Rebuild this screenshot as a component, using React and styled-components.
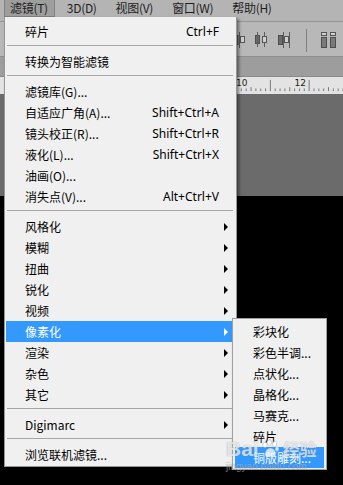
import styled, { createGlobalStyle } from "styled-components";

const GlobalStyle = createGlobalStyle`
  * {
    box-sizing: border-box;
  }
  body {
    margin: 0;
    background: #000;
    font-family: "Noto Sans CJK SC", "Noto Sans", sans-serif;
  }
`;

const topMenus = ["滤镜(T)", "3D(D)", "视图(V)", "窗口(W)", "帮助(H)"];

const filterItems = [
  { label: "碎片", shortcut: "Ctrl+F" },
  { sep: true },
  { label: "转换为智能滤镜" },
  { sep: true },
  { label: "滤镜库(G)..." },
  { label: "自适应广角(A)...", shortcut: "Shift+Ctrl+A" },
  { label: "镜头校正(R)...", shortcut: "Shift+Ctrl+R" },
  { label: "液化(L)...", shortcut: "Shift+Ctrl+X" },
  { label: "油画(O)..." },
  { label: "消失点(V)...", shortcut: "Alt+Ctrl+V" },
  { sep: true },
  { label: "风格化", sub: true },
  { label: "模糊", sub: true },
  { label: "扭曲", sub: true },
  { label: "锐化", sub: true },
  { label: "视频", sub: true },
  { label: "像素化", sub: true, active: true },
  { label: "渲染", sub: true },
  { label: "杂色", sub: true },
  { label: "其它", sub: true },
  { sep: true },
  { label: "Digimarc", sub: true },
  { sep: true },
  { label: "浏览联机滤镜..." },
];

const pixelItems = [
  "彩块化",
  "彩色半调...",
  "点状化...",
  "晶格化...",
  "马赛克...",
  "碎片",
  "铜版雕刻...",
];

function DistLeft() {
  return (
    <svg width="14" height="16" viewBox="0 0 14 16">
      <line x1="1.5" y1="0" x2="1.5" y2="16" stroke="#5c5c5c" />
      <rect x="2" y="3.5" width="4" height="9" fill="#6c6c6c" stroke="#4e4e4e" />
      <line x1="7.5" y1="0" x2="7.5" y2="16" stroke="#5c5c5c" />
      <rect x="8.5" y="4.5" width="4" height="6" fill="#cfcfcf" stroke="#555" />
    </svg>
  );
}

function DistCenter() {
  return (
    <svg width="14" height="16" viewBox="0 0 14 16">
      <rect x="0.5" y="3.5" width="4" height="8" fill="#6c6c6c" stroke="#4e4e4e" />
      <line x1="2.5" y1="0" x2="2.5" y2="15" stroke="#5c5c5c" />
      <line x1="9.5" y1="0" x2="9.5" y2="15" stroke="#5c5c5c" />
      <rect x="7.5" y="4.5" width="4" height="6" fill="#cfcfcf" stroke="#555" />
    </svg>
  );
}

function DistRight() {
  return (
    <svg width="14" height="16" viewBox="0 0 14 16">
      <rect x="0.5" y="3.5" width="4" height="9" fill="#6c6c6c" stroke="#4e4e4e" />
      <line x1="5.5" y1="0" x2="5.5" y2="16" stroke="#5c5c5c" />
      <rect x="6.5" y="4.5" width="4" height="6" fill="#cfcfcf" stroke="#555" />
      <line x1="11.5" y1="0" x2="11.5" y2="16" stroke="#5c5c5c" />
    </svg>
  );
}

function DistSpacing() {
  return (
    <svg width="16" height="16" viewBox="0 0 16 16">
      <rect x="0.5" y="0.5" width="5" height="3" fill="#cfcfcf" stroke="#555" />
      <rect x="0.5" y="5.5" width="5" height="10" fill="#7a7a7a" stroke="#4e4e4e" />
      <rect x="9.5" y="0.5" width="5" height="3" fill="#cfcfcf" stroke="#555" />
      <rect x="9.5" y="5.5" width="5" height="10" fill="#7a7a7a" stroke="#4e4e4e" />
    </svg>
  );
}

function RulerTicks() {
  const ticks = [];
  for (let i = 0; i < 24; i++) {
    const x = 1 + i * 7.35;
    const major = i % 8 === 0;
    const mid = i % 4 === 0;
    ticks.push(
      <line
        key={i}
        x1={x}
        x2={x}
        y1={major ? 0 : mid ? 11 : 13}
        y2={17}
        stroke="#444"
        strokeWidth="1"
      />
    );
  }
  return (
    <svg width="170" height="17" viewBox="0 0 170 17">
      {ticks}
    </svg>
  );
}

function Paw() {
  return (
    <svg width="20" height="20" viewBox="0 0 20 20">
      <g fill="rgba(255,255,255,0.72)" stroke="rgba(90,90,90,0.35)" strokeWidth="0.6">
        <ellipse cx="5" cy="6" rx="2.2" ry="2.8" />
        <ellipse cx="9.5" cy="3.5" rx="2.2" ry="2.8" />
        <ellipse cx="14.5" cy="5" rx="2.2" ry="2.8" />
        <ellipse cx="17" cy="10" rx="2" ry="2.5" />
        <path d="M5 16 C5 11 8 9 10.5 9 C13.5 9 16 12 16 15.5 C16 18.5 13 18.5 10.5 17.5 C8 18.5 5 18.8 5 16 Z" />
      </g>
    </svg>
  );
}

export default function App() {
  return (
    <>
      <GlobalStyle />
      <Screen>
        <MenuBar>
          {topMenus.map((m, i) => (
            <TopItem key={m} $active={i === 0}>
              {m}
            </TopItem>
          ))}
        </MenuBar>
        <Toolbar>
          <DistLeft />
          <DistCenter />
          <DistRight />
          <ToolSep />
          <DistSpacing />
        </Toolbar>
        <OptionBand />
        <Ruler>
          <RulerLabels>
            <span>10</span>
            <span>12</span>
          </RulerLabels>
          <RulerTicks />
        </Ruler>
        <Canvas />
        <Blackout />

        <Dropdown>
          {filterItems.map((it, i) =>
            it.sep ? (
              <Separator key={i} />
            ) : (
              <Item key={i} $active={it.active}>
                <Label>{it.label}</Label>
                {it.shortcut && <Shortcut>{it.shortcut}</Shortcut>}
                <ArrowSlot>{it.sub && <Arrow $active={it.active} />}</ArrowSlot>
              </Item>
            )
          )}
        </Dropdown>

        <SubMenu>
          {pixelItems.map((label, i) => (
            <SubItem key={label} $active={i === pixelItems.length - 1}>
              {label}
            </SubItem>
          ))}
        </SubMenu>

        <Watermark>
          <Brand>
            <span>Bai</span>
            <Paw />
            <span className="cn">经验</span>
          </Brand>
          <Site>jingyan.baidu.com</Site>
        </Watermark>
      </Screen>
    </>
  );
}

const Screen = styled.div`
  position: relative;
  width: 343px;
  height: 485px;
  overflow: hidden;
  display: flex;
  flex-direction: column;
  background: #000;
`;

const MenuBar = styled.div`
  height: 22px;
  flex: none;
  display: flex;
  align-items: flex-start;
  gap: 6px;
  padding-left: 4px;
  background: #b4b4b4;
  border-bottom: 1px solid #949494;
`;

const TopItem = styled.div`
  height: 17px;
  line-height: 16px;
  padding: 0 6px 0 5px;
  font-size: 12px;
  letter-spacing: -0.3px;
  color: #1e1e1e;
  white-space: nowrap;
  background: ${(p) => (p.$active ? "#9e9e9e" : "transparent")};
  border: 1px solid ${(p) => (p.$active ? "#828282" : "transparent")};
  border-top: none;
`;

const Toolbar = styled.div`
  height: 35px;
  flex: none;
  display: flex;
  align-items: center;
  gap: 9px;
  padding-left: 232px;
  padding-top: 2px;
  background: #b8b8b8;
  border-bottom: 1px solid #8e8e8e;
`;

const ToolSep = styled.div`
  width: 1px;
  height: 23px;
  margin: 0 5px;
  background: #808080;
`;

const OptionBand = styled.div`
  height: 20px;
  flex: none;
  background: #9d9d9d;
  border-bottom: 1px solid #8a8a8a;
`;

const Ruler = styled.div`
  position: relative;
  height: 17px;
  flex: none;
  background: #e3e3e3;
  padding-left: 231px;
  display: flex;
  align-items: flex-end;
`;

const RulerLabels = styled.div`
  position: absolute;
  top: 1px;
  left: 236px;
  display: flex;
  gap: 47px;
  font-family: "DejaVu Sans", sans-serif;
  font-size: 9px;
  line-height: 11px;
  color: #1a1a1a;
`;

const Canvas = styled.div`
  height: 102px;
  flex: none;
  background: #6b6b6b;
`;

const Blackout = styled.div`
  flex: 1;
  background: #000;
`;

const Dropdown = styled.div`
  position: absolute;
  left: 4px;
  top: 17px;
  width: 233px;
  padding: 4px 1px 1px 1px;
  background: #f0f0f0;
  border: 1px solid #979797;
  border-top: none;
  box-shadow: 2px 2px 3px rgba(0, 0, 0, 0.45);
`;

const Item = styled.div`
  display: flex;
  align-items: center;
  height: 21px;
  padding-left: 19px;
  font-size: 12px;
  line-height: 21px;
  white-space: nowrap;
  color: ${(p) => (p.$active ? "#fff" : "#000")};
  background: ${(p) => (p.$active ? "#3399ff" : "transparent")};
`;

const Label = styled.span`
  flex: 1;
`;

const Shortcut = styled.span`
  font-family: "Noto Sans", sans-serif;
`;

const ArrowSlot = styled.span`
  width: 16px;
  height: 21px;
  display: flex;
  align-items: center;
  padding-left: 5px;
`;

const Arrow = styled.span`
  width: 0;
  height: 0;
  border-left: 4px solid ${(p) => (p.$active ? "#fff" : "#000")};
  border-top: 4px solid transparent;
  border-bottom: 4px solid transparent;
`;

const Separator = styled.div`
  height: 1px;
  margin: 3px 2px 5px 1px;
  background: #a6a6a6;
`;

const SubMenu = styled.div`
  position: absolute;
  left: 232px;
  top: 318px;
  width: 95px;
  padding: 2px 2px 1px;
  background: #f0f0f0;
  border: 1px solid #a0a0a0;
  box-shadow: 2px 2px 3px rgba(0, 0, 0, 0.45);
`;

const SubItem = styled.div`
  height: 21px;
  padding-left: 18px;
  font-size: 12px;
  line-height: 21px;
  white-space: nowrap;
  color: ${(p) => (p.$active ? "#fff" : "#000")};
  background: ${(p) => (p.$active ? "#3399ff" : "transparent")};
`;

const Watermark = styled.div`
  position: absolute;
  left: 226px;
  top: 437px;
  color: rgba(255, 255, 255, 0.72);
  text-shadow: 0 0 1px rgba(80, 80, 80, 0.5);
  pointer-events: none;
`;

const Brand = styled.div`
  display: flex;
  align-items: center;
  gap: 1px;
  font-family: "Liberation Sans", sans-serif;
  font-weight: bold;
  font-size: 21px;
  line-height: 24px;
  .cn {
    font-family: "Noto Sans CJK SC", sans-serif;
    font-size: 17px;
    margin-left: 2px;
  }
`;

const Site = styled.div`
  font-family: "Liberation Sans", sans-serif;
  font-size: 10px;
  line-height: 12px;
  color: rgba(255, 255, 255, 0.35);
`;
